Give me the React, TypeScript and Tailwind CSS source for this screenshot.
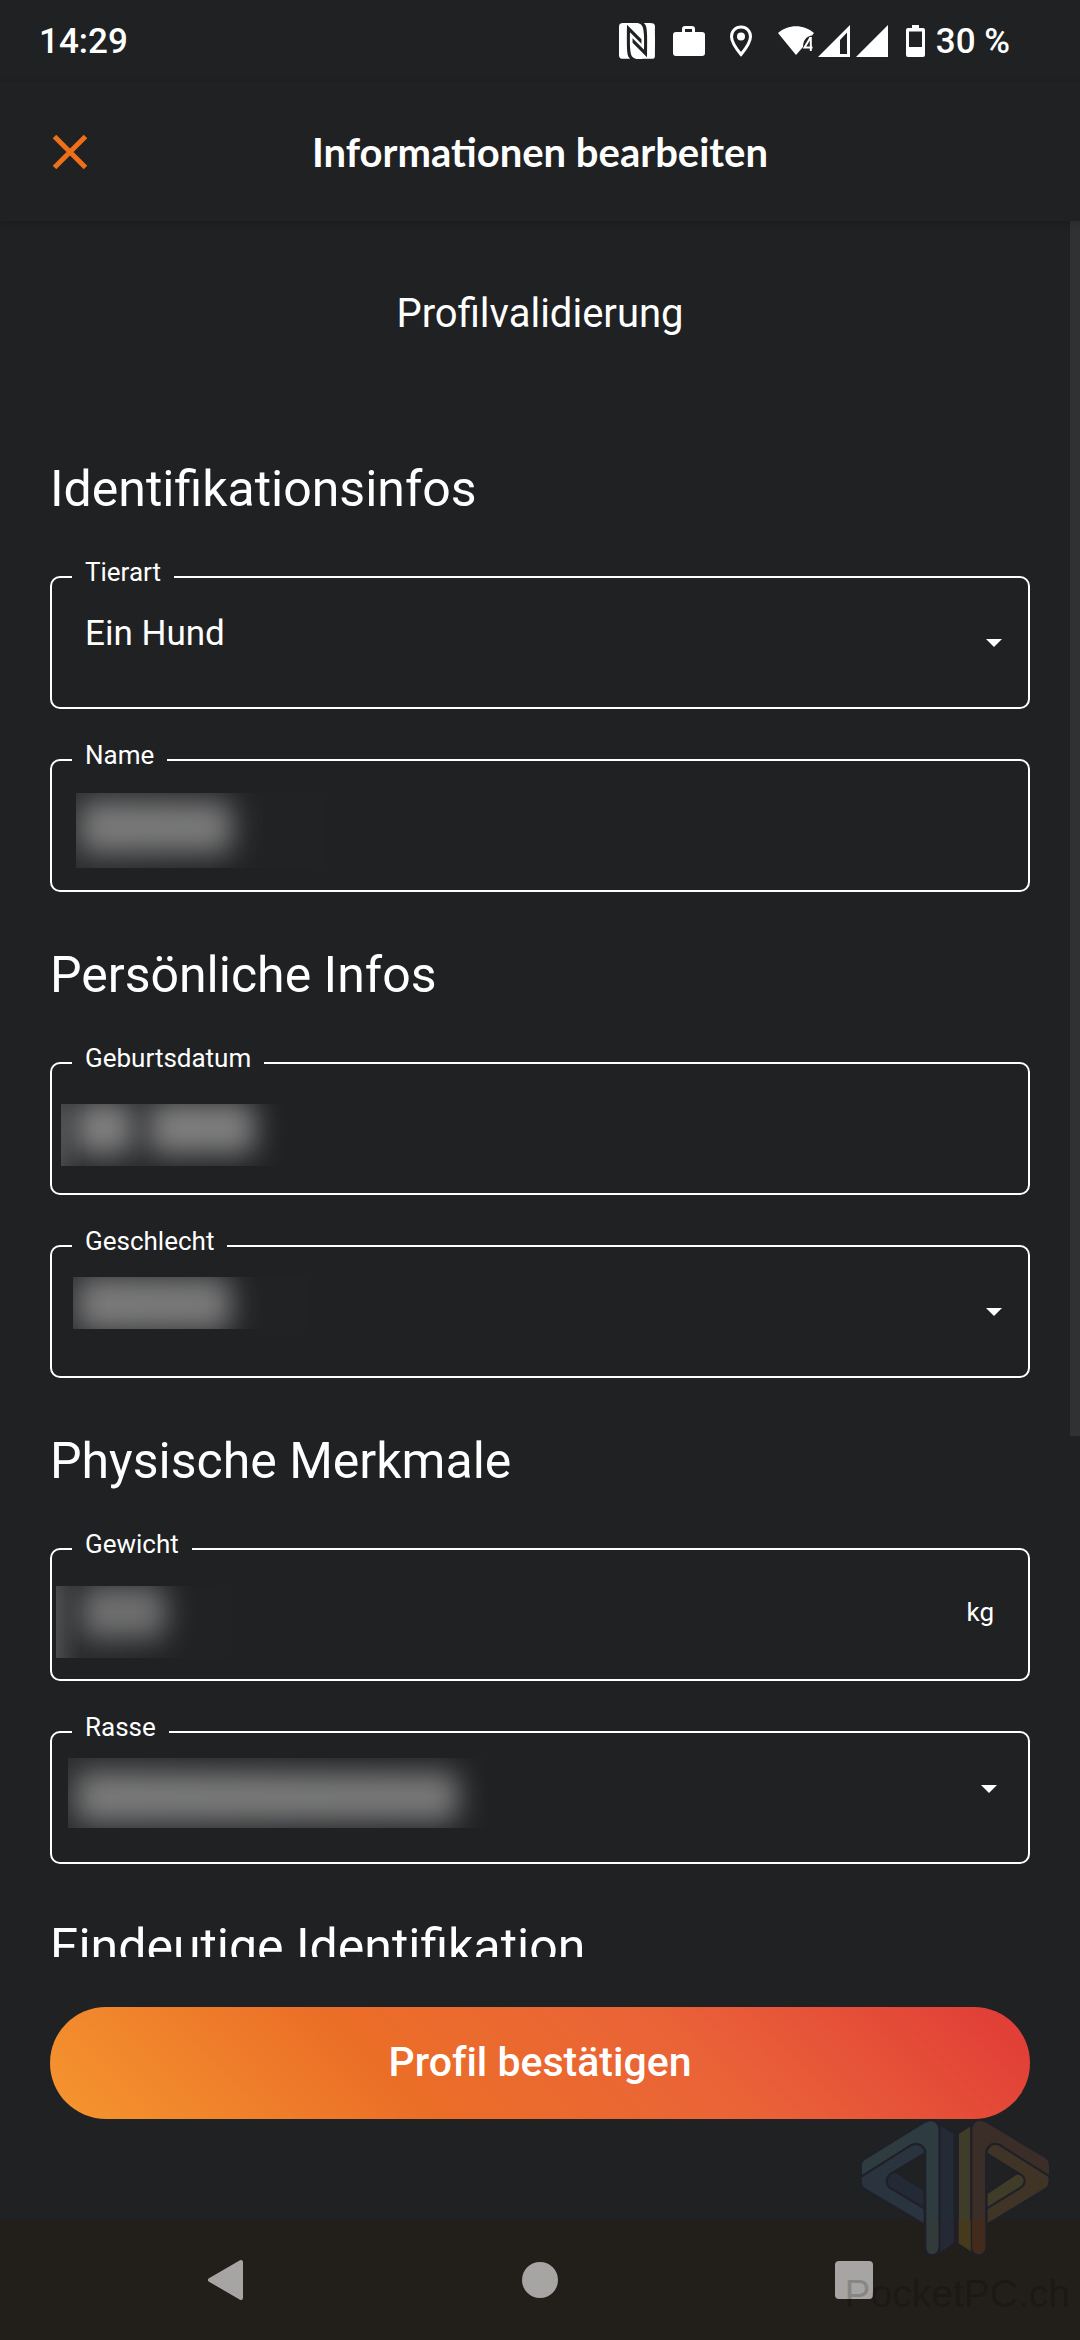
import { useState } from "react";
import { SiNfc } from "react-icons/si";

function StatusBar() {
  return (
    <div className="flex h-[82px] shrink-0 items-center justify-between pl-[39px] pr-[70px] text-[35px] font-medium leading-none">
      <span>14:29</span>
      <div className="flex items-center">
        <SiNfc className="size-[36px]" />

        {/* Work profile */}
        <svg viewBox="0 0 32 30" className="ml-[18px] h-[30px] w-[32px]" fill="currentColor">
          <path d="M3 6H9V3a3 3 0 0 1 3-3h7a3 3 0 0 1 3 3v3h7a3 3 0 0 1 3 3v18a3 3 0 0 1-3 3H3a3 3 0 0 1-3-3V9a3 3 0 0 1 3-3ZM12 3v3h7V3Z" />
        </svg>

        {/* Location */}
        <svg viewBox="0 0 24 32" className="ml-[24px] h-[32px] w-[24px]" fill="none">
          <path
            d="M12 2C6.500 2 2.500 6.200 2.500 11.500 2.500 18 12 29.500 12 29.500S21.500 18 21.500 11.500C21.500 6.200 17.500 2 12 2Z"
            stroke="currentColor"
            strokeWidth="3"
          />
          <circle cx="12" cy="11.500" r="4" fill="currentColor" />
        </svg>

        {/* Wifi */}
        <svg viewBox="0 0 37 32" className="ml-[25px] h-[32px] w-[37px]" fill="currentColor">
          <path d="M0 8C10 -1 26 -1 36 8L34 10.500C28 11 25 16 25 22L18 30Z" />
          <path d="M32.500 12.500 26.500 22.500H34.500M32.800 12V26" fill="none" stroke="currentColor" strokeWidth="2" />
        </svg>

        <svg viewBox="0 0 32 32" className="ml-[3px] size-[32px]" fill="currentColor">
          <path fillRule="evenodd" d="M32 0V32H0ZM29 7.500 22 15V29H29Z" />
        </svg>
        <svg viewBox="0 0 32 32" className="ml-[6px] size-[32px]" fill="currentColor">
          <path d="M32 0V32H0Z" />
        </svg>

        {/* Battery */}
        <svg viewBox="0 0 19 32" className="ml-[18px] h-[32px] w-[19px]" fill="currentColor">
          <path fillRule="evenodd" d="M6 0H13V3H17a2 2 0 0 1 2 2V30a2 2 0 0 1-2 2H2a2 2 0 0 1-2-2V5a2 2 0 0 1 2-2H6ZM3 6.500V22H16V6.500Z" />
        </svg>
        <span className="ml-[11px]">30 %</span>
      </div>
    </div>
  );
}

type Blob = { x: number; y: number; w: number; h: number; o: number };

// Blurred stand-in for a private value
function Hidden({ id, width, height, blobs, className }: { id: string; width: number; height: number; blobs: Blob[]; className: string }) {
  return (
    <svg
      aria-hidden="true"
      width={width}
      height={height}
      viewBox={`0 0 ${width} ${height}`}
      className={`pointer-events-none absolute ${className}`}
    >
      <defs>
        <filter id={id} x="-100%" y="-150%" width="300%" height="400%">
          <feGaussianBlur stdDeviation="14" />
        </filter>
        <linearGradient id={`${id}-fade`}>
          <stop offset="0" stopColor="#fff" stopOpacity="0.05" />
          <stop offset="0.6" stopColor="#fff" stopOpacity="0.01" />
          <stop offset="1" stopColor="#fff" stopOpacity="0" />
        </linearGradient>
      </defs>
      <rect width={width} height={height} fill={`url(#${id}-fade)`} />
      {blobs.map((b, i) => (
        <rect key={i} x={b.x} y={b.y} width={b.w} height={b.h} rx="10" fill="#969696" fillOpacity={b.o} filter={`url(#${id})`} />
      ))}
    </svg>
  );
}

function Caret({ className }: { className: string }) {
  return (
    <svg viewBox="0 0 16 8" className={`pointer-events-none absolute h-[8px] w-[16px] ${className}`} fill="currentColor">
      <path d="M0 0H16L8 8Z" />
    </svg>
  );
}

function Field({ id, label, children }: { id: string; label: string; children: React.ReactNode }) {
  return (
    <div className="relative rounded-[10px] border-2 border-white">
      <label htmlFor={id} className="absolute -top-[21px] left-[20px] bg-[#202123] px-[13px] text-[26px] leading-[30px]">
        {label}
      </label>
      {children}
    </div>
  );
}

function Section({ title, children }: { title: string; children?: React.ReactNode }) {
  return (
    <section className="mb-[53px]">
      <h2 className="mb-[57px] text-[50px] leading-[60px]">{title}</h2>
      <div className="flex flex-col gap-[50px]">{children}</div>
    </section>
  );
}

const control = "block h-[129px] w-full appearance-none bg-transparent px-[33px] pb-[17px] text-[35px] text-white outline-none";

function Watermark() {
  return (
    <div className="pointer-events-none absolute bottom-0 right-0 flex flex-col items-end">
      <svg viewBox="228 348 600 426" className="mr-[24px] h-[142px] w-[200px]" strokeLinejoin="round" strokeLinecap="round">
        <g opacity="0.9" stroke="#20202a" strokeWidth="6">
          {/* Left half */}
          <path d="M478 372 524 400V730L478 762Z" fill="#252b39" />
          <path d="M350 518 434 572V626L328 563Q310 543 328 524 338 514 350 518Z" fill="#252b38" />
          <path d="M243 530 394 434Q420 424 436 452L434 460 330 522Q310 543 328 563L434 626V674L252 566Q240 556 243 530Z" fill="#2a3742" />
          <path d="M243 530V494Q243 484 252 478L434 366Q468 350 478 384V744Q474 764 457 765 438 764 436 744V452Q420 422 392 436Z" fill="#303f46" />
          {/* Right half */}
          <path d="M574 374 534 400V730L574 756Z" fill="#433f2a" />
          <path d="M620 580 708 522Q726 518 734 536 738 552 724 562L620 626Z" fill="#434029" />
          <path d="M620 454Q632 424 658 434L806 526Q814 552 798 566L620 674V626L724 562Q744 544 726 526L620 460Z" fill="#433727" />
          <path d="M574 384Q584 350 618 364L800 474Q810 482 810 494V530L658 434Q628 424 618 454V744Q614 764 596 765 578 764 574 744Z" fill="#3f2f28" />
        </g>
        <path d="M536 660H572V754L536 730Z" fill="#453a1b" />
        <path d="M577 660H616V744Q612 762 596 762 580 762 577 744Z" fill="#432b1b" />
        <path d="M440 660H475V744Q472 762 457 762 442 762 440 744Z" fill="#323a3a" />
      </svg>
      <p className="mb-[12px] mr-[10px] flex h-[70px] items-center font-['Liberation_Sans',sans-serif] text-[39px] leading-none text-black/20">
        PocketPC.ch
      </p>
    </div>
  );
}

export default function App() {
  const [species, setSpecies] = useState("dog");
  const [sex, setSex] = useState("");

  return (
    <div className="relative flex h-screen flex-col overflow-hidden bg-[#202123] font-[Roboto,sans-serif] text-white">
      <StatusBar />

      <header className="relative z-10 flex h-[139px] shrink-0 items-center justify-center shadow-[0_2px_8px_rgba(0,0,0,0.2)]">
        <button type="button" aria-label="Schließen" className="absolute left-[52px]">
          <svg viewBox="0 0 36 36" className="size-[36px]" fill="none" stroke="#ee6f1a" strokeWidth="5">
            <path d="M2.500 2.500 33.500 33.500M33.500 2.500 2.500 33.500" />
          </svg>
        </button>
        <h1 className="font-[Lato,sans-serif] text-[40px] font-bold">Informationen bearbeiten</h1>
      </header>

      <main className="relative min-h-0 flex-1 overflow-hidden px-[50px]">
        <p className="mb-[121px] mt-[69px] text-center text-[40px] leading-[48px]">Profilvalidierung</p>

        <Section title="Identifikationsinfos">
          <Field id="species" label="Tierart">
            <select id="species" value={species} onChange={(e) => setSpecies(e.target.value)} className={control}>
              <option value="dog">Ein Hund</option>
            </select>
            <Caret className="right-[26px] top-[61px]" />
          </Field>
          <Field id="name" label="Name">
            <input id="name" type="text" className={control} />
            <Hidden id="b-name" width={271} height={75} className="left-[24px] top-[32px]" blobs={[{ x: 4, y: 8, w: 152, h: 52, o: 0.75 }]} />
          </Field>
        </Section>

        <Section title="Persönliche Infos">
          <Field id="birthday" label="Geburtsdatum">
            <input id="birthday" type="text" className={control} />
            <Hidden
              id="b-birthday"
              width={243}
              height={62}
              className="left-[9px] top-[40px]"
              blobs={[
                { x: -20, y: -10, w: 20, h: 90, o: 0.6 },
                { x: 14, y: -2, w: 58, h: 52, o: 0.8 },
                { x: 88, y: -2, w: 106, h: 52, o: 0.8 },
              ]}
            />
          </Field>
          <Field id="sex" label="Geschlecht">
            <select id="sex" value={sex} onChange={(e) => setSex(e.target.value)} className={control}>
              <option value=""></option>
            </select>
            <Hidden id="b-sex" width={257} height={52} className="left-[21px] top-[30px]" blobs={[{ x: 4, y: 0, w: 154, h: 54, o: 0.75 }]} />
            <Caret className="right-[26px] top-[61px]" />
          </Field>
        </Section>

        <Section title="Physische Merkmale">
          <Field id="weight" label="Gewicht">
            <input id="weight" type="text" className={control} />
            <span className="absolute right-[34px] top-[47px] text-[26px] leading-[30px]">kg</span>
            <Hidden
              id="b-weight"
              width={187}
              height={72}
              className="left-[4px] top-[36px]"
              blobs={[
                { x: -20, y: -20, w: 22, h: 120, o: 0.6 },
                { x: 26, y: 0, w: 84, h: 52, o: 0.65 },
              ]}
            />
          </Field>
          <Field id="breed" label="Rasse">
            <input id="breed" type="text" className={control} />
            <Hidden id="b-breed" width={458} height={70} className="left-[16px] top-[25px]" blobs={[{ x: 8, y: 14, w: 382, h: 50, o: 0.75 }]} />
            <Caret className="right-[31px] top-[52px]" />
          </Field>
        </Section>

        <Section title="Eindeutige Identifikation" />

        {/* Scroll thumb */}
        <div className="absolute right-0 top-0 h-[70%] w-[10px] bg-[#303133]" />
      </main>

      <footer className="shrink-0 px-[50px] pb-[101px] pt-[50px]">
        <button
          type="button"
          className="h-[112px] w-full rounded-full bg-[linear-gradient(45deg,#f5962f_0%,#eb6e27_35%,#ea6338_65%,#e03b37_100%)] text-[41px] font-medium [font-variant-ligatures:none]"
        >
          Profil bestätigen
        </button>
      </footer>

      <nav className="flex h-[120px] shrink-0 items-center justify-between bg-[#221e1a] px-[207px] text-[#a6a5a3]">
        <button type="button" aria-label="Zurück">
          <svg viewBox="0 0 38 42" className="h-[42px] w-[38px]" fill="currentColor" stroke="currentColor" strokeWidth="4" strokeLinejoin="round">
            <path d="M3 21 34 3V39Z" />
          </svg>
        </button>
        <button type="button" aria-label="Startseite" className="size-[36px] rounded-full bg-current"></button>
        <button type="button" aria-label="Übersicht" className="size-[38px] rounded-[4px] bg-current"></button>
      </nav>

      <Watermark />
    </div>
  );
}
